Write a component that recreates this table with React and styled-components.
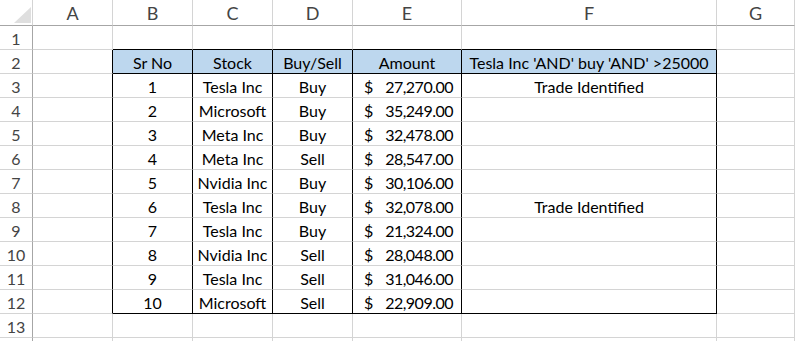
import React from 'react'
import styled, { createGlobalStyle } from 'styled-components'

const GlobalStyle = createGlobalStyle`
  html, body {
    margin: 0;
    padding: 0;
    background: #ffffff;
    overflow: hidden;
  }
`;

const GRID = '#d4d4d4';
const HEAD_LINE = '#a6a6a6';
const INK = '#000000';

const Sheet = styled.div`
  display: grid;
  grid-template-columns: 33px 80px 80px 80px 80px 109px 255px 78px;
  grid-template-rows: 26px;
  grid-auto-rows: 24px;
  width: 795px;
  height: 341px;
  overflow: hidden;
  font-family: 'Lato', 'Liberation Sans', sans-serif;
  font-size: 16px;
  color: #000;
`;

const Cell = styled.div`
  box-sizing: border-box;
  display: flex;
  align-items: center;
  justify-content: ${p => p.$align || 'center'};
  border-right: 1px solid ${p => p.$right || GRID};
  border-bottom: 1px solid ${p => p.$bottom || GRID};
  background: ${p => p.$bg || '#fff'};
  white-space: nowrap;
  overflow: visible;
  padding-top: 1px;
`;

const Corner = styled.div`
  box-sizing: border-box;
  position: relative;
  border-right: 1px solid ${GRID};
  border-bottom: 1px solid ${HEAD_LINE};
`;

const CornerMark = styled.svg`
  position: absolute;
  left: 14px;
  top: 7px;
`;

const ColHead = styled(Cell)`
  font-size: 18px;
  color: #444;
  border-bottom-color: ${HEAD_LINE};
  padding-top: 1px;
`;

const RowHead = styled(Cell)`
  color: #444;
  border-right-color: ${HEAD_LINE};
`;

const Money = styled(Cell)`
  justify-content: space-between;
  padding-left: 11px;
  padding-right: 8px;
`;

const Figure = styled.span`
  letter-spacing: -0.5px;
`;

const columns = ['A', 'B', 'C', 'D', 'E', 'F', 'G'];

const header = ['Sr No', 'Stock', 'Buy/Sell', 'Amount', "Tesla Inc 'AND' buy 'AND' >25000"];

const trades = [
  [1, 'Tesla Inc', 'Buy', '27,270.00', 'Trade Identified'],
  [2, 'Microsoft', 'Buy', '35,249.00', ''],
  [3, 'Meta Inc', 'Buy', '32,478.00', ''],
  [4, 'Meta Inc', 'Sell', '28,547.00', ''],
  [5, 'Nvidia Inc', 'Buy', '30,106.00', ''],
  [6, 'Tesla Inc', 'Buy', '32,078.00', 'Trade Identified'],
  [7, 'Tesla Inc', 'Buy', '21,324.00', ''],
  [8, 'Nvidia Inc', 'Sell', '28,048.00', ''],
  [9, 'Tesla Inc', 'Sell', '31,046.00', ''],
  [10, 'Microsoft', 'Sell', '22,909.00', ''],
];

// rows 2..12 hold the bordered table in columns B..F
function borders(row, col) {
  const inTable = row >= 2 && row <= 12;
  const right = inTable && col <= 5 ? INK : GRID;
  const bottom = (row === 1 || row === 2 || row === 12) && col >= 1 && col <= 5 ? INK : GRID;
  return { right, bottom };
}

function valueAt(row, col) {
  if (row === 2 && col >= 1 && col <= 5) return header[col - 1];
  if (row >= 3 && row <= 12 && col >= 1 && col <= 5) return trades[row - 3][col - 1];
  return '';
}

export default function App() {
  // row 14 only peeks in at the bottom edge, so its number stays out of view
  const rows = Array.from({ length: 14 }, (_, i) => i + 1);

  return (
    <>
      <GlobalStyle />
      <Sheet>
        <Corner>
          <CornerMark width="18" height="16" viewBox="0 0 18 16">
            <polygon points="0,16 17,16 17,0" fill="#dfdfdf" />
          </CornerMark>
        </Corner>
        {columns.map(c => (
          <ColHead key={c}>{c}</ColHead>
        ))}

        {rows.map(r => (
          <React.Fragment key={r}>
            <RowHead>{r < 14 ? r : ''}</RowHead>
            {columns.map((c, ci) => {
              const { right, bottom } = borders(r, ci);
              const value = valueAt(r, ci);
              const bg = r === 2 && ci >= 1 && ci <= 5 ? '#bdd7ee' : undefined;
              if (ci === 4 && r >= 3 && r <= 12) {
                return (
                  <Money key={c} $right={right} $bottom={bottom}>
                    <span>$</span>
                    <Figure>{value}</Figure>
                  </Money>
                );
              }
              return (
                <Cell key={c} $right={right} $bottom={bottom} $bg={bg}>
                  {value}
                </Cell>
              );
            })}
          </React.Fragment>
        ))}
      </Sheet>
    </>
  );
}
